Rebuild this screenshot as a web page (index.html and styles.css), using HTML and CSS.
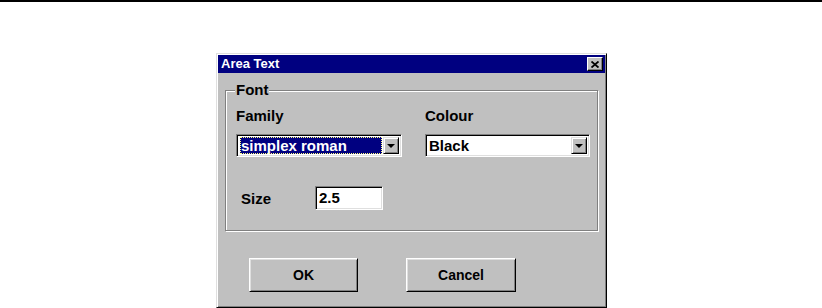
FILE: index.html
```html
<!DOCTYPE html>
<html lang="en">
<head>
    <meta charset="UTF-8">
    <meta name="viewport" content="width=device-width, initial-scale=1.0">
    <title>Area Text</title>
    <link rel="stylesheet" href="styles.css">
</head>
<body>
    <div class="rule"></div>

    <div class="stage">
        <div class="dialog">
            <div class="titlebar">
                <span class="title">Area Text</span>
                <span class="close">
                    <svg width="8" height="7" viewBox="0 0 8 7">
                        <path d="M0.5 0.5 L7.5 6.5 M7.5 0.5 L0.5 6.5" stroke="#000" stroke-width="1.8" fill="none"/>
                    </svg>
                </span>
            </div>

            <fieldset class="group">
                <legend>Font</legend>
                <div class="fields">
                    <div class="field">
                        <label>Family</label>
                        <div class="combo">
                            <div class="combo-value"><span class="selected">simplex roman</span></div>
                            <div class="combo-btn"><span class="arrow"></span></div>
                        </div>
                    </div>
                    <div class="field">
                        <label>Colour</label>
                        <div class="combo combo-wide">
                            <div class="combo-value">Black</div>
                            <div class="combo-btn"><span class="arrow"></span></div>
                        </div>
                    </div>
                </div>
                <div class="size-row">
                    <label>Size</label>
                    <div class="textbox">2.5</div>
                </div>
            </fieldset>

            <div class="buttons">
                <div class="button">OK</div>
                <div class="button button-cancel">Cancel</div>
            </div>
        </div>
    </div>
</body>
</html>
```

FILE: styles.css
```css
body {
    margin: 0;
    padding: 0;
    background: #fff;
    font-family: "Liberation Sans", Arial, sans-serif;
    font-weight: bold;
    color: #000;
}
.rule {
    height: 2px;
    background: #000;
}
.stage {
    padding: 51px 0 0 216px;
}
.dialog {
    width: 391px;
    height: 255px;
    box-sizing: border-box;
    background: #c0c0c0;
    border: 1px solid;
    border-color: #dfdfdf #000 #000 #dfdfdf;
    box-shadow: inset 1px 1px #fff, inset -1px -1px #808080;
    padding: 1px;
}
.titlebar {
    height: 18px;
    background: #000080;
    color: #fff;
    display: flex;
    align-items: center;
    justify-content: space-between;
    padding: 0 2px 0 3px;
}
.title {
    font-size: 13px;
    line-height: 18px;
}
.close {
    width: 14px;
    height: 12px;
    background: #c0c0c0;
    border: 1px solid;
    border-color: #fff #000 #000 #fff;
    box-shadow: inset -1px -1px #808080;
    display: flex;
    align-items: center;
    justify-content: center;
}
.group {
    margin: 9px 7px 0 7px;
    padding: 9px 9px 20px 10px;
    min-width: 0;
    border: 1px solid #808080;
    box-shadow: inset 1px 1px #fff, 1px 1px #fff;
}
.group legend {
    font-size: 15px;
    line-height: 16px;
    padding: 0 1px;
    margin-left: -1px;
    background: #c0c0c0;
}
.fields {
    display: flex;
    gap: 23px;
}
.field label {
    display: block;
    font-size: 15px;
    line-height: 17px;
    margin-bottom: 10px;
}
.combo {
    width: 166px;
    height: 23px;
    box-sizing: border-box;
    display: flex;
    background: #fff;
    border: 1px solid;
    border-color: #808080 #fff #fff #808080;
    box-shadow: inset 1px 1px #000, inset -1px -1px #dfdfdf;
    padding: 2px;
}
.combo-wide {
    width: 165px;
}
.combo-value {
    flex: 1;
    font-size: 15px;
    line-height: 17px;
    padding-left: 1px;
    display: flex;
}
.selected {
    flex: 1;
    background: #000080;
    color: #fff;
    outline: 1px dotted #ffff80;
    outline-offset: -1px;
    padding-left: 1px;
}
.combo-btn {
    width: 16px;
    height: 17px;
    box-sizing: border-box;
    margin-left: 1px;
    background: #c0c0c0;
    border: 1px solid;
    border-color: #dfdfdf #000 #000 #dfdfdf;
    box-shadow: inset 1px 1px #fff, inset -1px -1px #808080;
    display: flex;
    align-items: center;
    justify-content: center;
}
.arrow {
    width: 0;
    height: 0;
    border-left: 4px solid transparent;
    border-right: 4px solid transparent;
    border-top: 4px solid #000;
    margin-top: 1px;
}
.size-row {
    display: flex;
    align-items: center;
    margin-top: 29px;
    padding-left: 5px;
}
.size-row label {
    font-size: 15px;
    line-height: 17px;
    width: 74px;
}
.textbox {
    width: 68px;
    height: 24px;
    box-sizing: border-box;
    background: #fff;
    border: 1px solid;
    border-color: #808080 #fff #fff #808080;
    box-shadow: inset 1px 1px #000, inset -1px -1px #dfdfdf;
    font-size: 15px;
    line-height: 17px;
    padding: 2px 3px;
}
.buttons {
    display: flex;
    gap: 48px;
    margin-top: 27px;
    padding-left: 31px;
}
.button {
    width: 109px;
    height: 34px;
    box-sizing: border-box;
    background: #c0c0c0;
    border: 1px solid;
    border-color: #fff #000 #000 #fff;
    box-shadow: inset 1px 1px #dfdfdf, inset -1px -1px #808080;
    display: flex;
    align-items: center;
    justify-content: center;
    font-size: 14px;
}
.button-cancel {
    width: 110px;
}
```
